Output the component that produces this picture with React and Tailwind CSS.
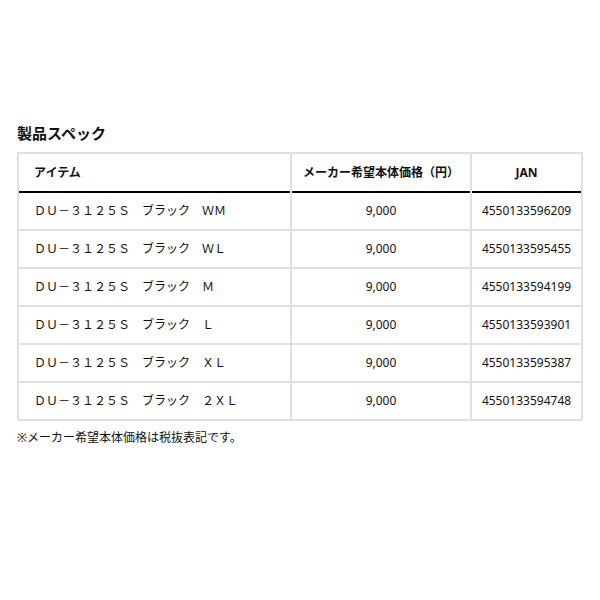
const rows = [
  ['ＤＵ－３１２５Ｓ　ブラック　ＷＭ', '9,000', '4550133596209'],
  ['ＤＵ－３１２５Ｓ　ブラック　ＷＬ', '9,000', '4550133595455'],
  ['ＤＵ－３１２５Ｓ　ブラック　Ｍ', '9,000', '4550133594199'],
  ['ＤＵ－３１２５Ｓ　ブラック　Ｌ', '9,000', '4550133593901'],
  ['ＤＵ－３１２５Ｓ　ブラック　ＸＬ', '9,000', '4550133595387'],
  ['ＤＵ－３１２５Ｓ　ブラック　２ＸＬ', '9,000', '4550133594748'],
]

export default function App() {
  return (
    <div
      className="h-[600px] w-[600px] bg-white px-[17px] pt-[123px] text-[#111]"
      style={{ fontFamily: '"Noto Sans", "Noto Sans CJK JP", sans-serif' }}
    >
      <h2 className="text-[15px] font-bold leading-[20px]">製品スペック</h2>
      <table className="mt-[9px] w-[566px] border-collapse border-2 border-[#e0e0e0] text-[12px]">
        <thead>
          <tr className="h-[39px] border-b-2 border-black">
            <th className="border-x-2 border-[#e0e0e0] pl-[15px] text-left font-bold">アイテム</th>
            <th className="w-[180px] border-x-2 border-[#e0e0e0] text-center font-bold">メーカー希望本体価格（円）</th>
            <th className="w-[111px] border-x-2 border-[#e0e0e0] text-center font-bold">JAN</th>
          </tr>
        </thead>
        <tbody>
          {rows.map((r) => (
            <tr key={r[2]} className="h-[38px] border-b-2 border-[#e0e0e0]">
              <td className="border-x-2 border-[#e0e0e0] pl-[15px]">{r[0]}</td>
              <td className="border-x-2 border-[#e0e0e0] text-center">{r[1]}</td>
              <td className="border-x-2 border-[#e0e0e0] text-center">{r[2]}</td>
            </tr>
          ))}
        </tbody>
      </table>
      <p className="mt-[8px] text-[12px] leading-[18px]">※メーカー希望本体価格は税抜表記です。</p>
    </div>
  )
}
